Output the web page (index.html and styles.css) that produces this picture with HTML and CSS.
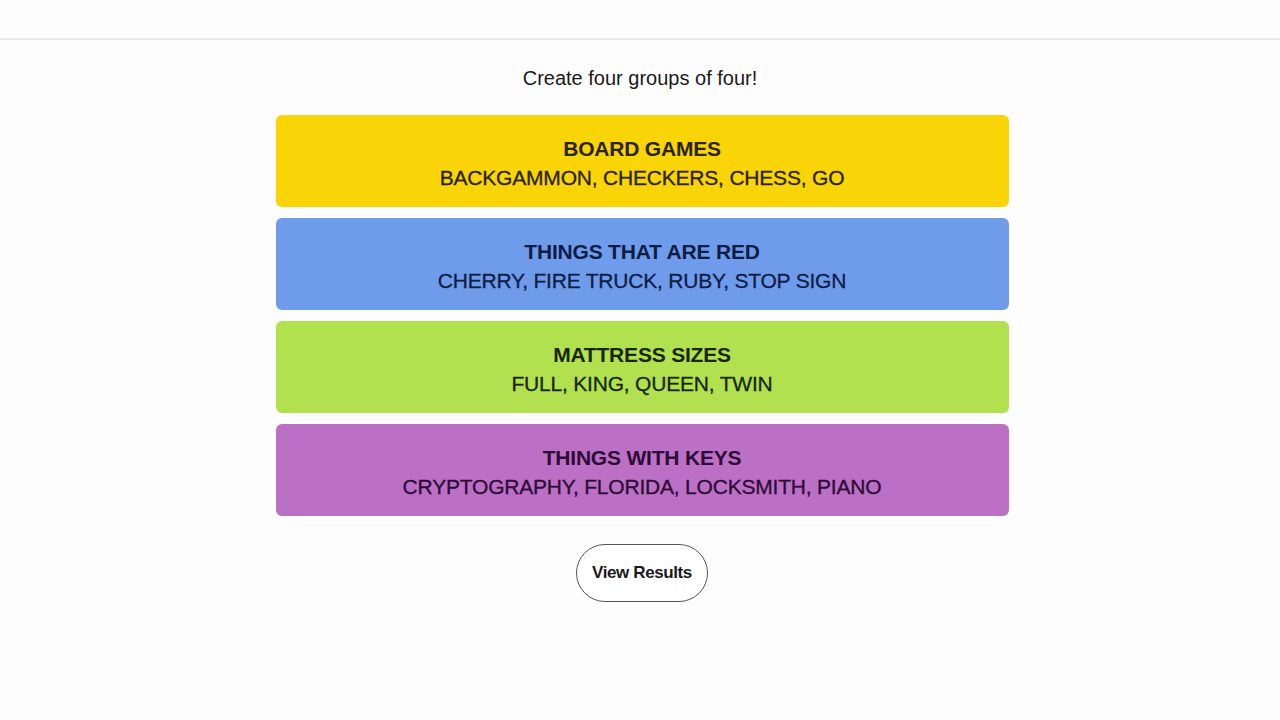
FILE: index.html
```html
<!DOCTYPE html>
<html lang="en">
<head>
    <meta charset="UTF-8">
    <meta name="viewport" content="width=device-width, initial-scale=1.0">
    <title>Connections - Solved</title>
    <link rel="stylesheet" href="styles.css">
</head>
<body>
    <header class="top-bar"></header>

    <main class="game">
        <p class="prompt">Create four groups of four!</p>

        <div class="groups">
            <div class="group yellow">
                <h3>BOARD GAMES</h3>
                <p>BACKGAMMON, CHECKERS, CHESS, GO</p>
            </div>
            <div class="group blue">
                <h3>THINGS THAT ARE RED</h3>
                <p>CHERRY, FIRE TRUCK, RUBY, STOP SIGN</p>
            </div>
            <div class="group green">
                <h3>MATTRESS SIZES</h3>
                <p>FULL, KING, QUEEN, TWIN</p>
            </div>
            <div class="group purple">
                <h3>THINGS WITH KEYS</h3>
                <p>CRYPTOGRAPHY, FLORIDA, LOCKSMITH, PIANO</p>
            </div>
        </div>

        <button class="results-btn">View Results</button>
    </main>
</body>
</html>
```

FILE: styles.css
```css
* {
    margin: 0;
    padding: 0;
    box-sizing: border-box;
}

body {
    font-family: 'Liberation Sans', Arial, sans-serif;
    background: #fdfdfd;
    color: #121212;
    min-height: 100vh;
}

.top-bar {
    height: 40px;
    border-bottom: 2px solid #e8e8e8;
}

.game {
    display: flex;
    flex-direction: column;
    align-items: center;
}

.prompt {
    margin-top: 26px;
    font-size: 20px;
    color: #1a1a1a;
    line-height: 24px;
}

.groups {
    width: 733px;
    margin-top: 25px;
    margin-left: 4px;
    display: flex;
    flex-direction: column;
    gap: 11px;
}

.group {
    height: 92px;
    border-radius: 6px;
    display: flex;
    flex-direction: column;
    justify-content: center;
    align-items: center;
    text-align: center;
    padding-top: 4px;
}

.group h3 {
    font-size: 21px;
    font-weight: 700;
    line-height: 29px;
    letter-spacing: -0.2px;
}

.group p {
    font-size: 21px;
    line-height: 29px;
    letter-spacing: -0.2px;
    -webkit-text-stroke: 0.3px currentColor;
}

.yellow { background: #f9d406; color: #2a2306; }
.blue { background: #6f9cea; color: #0d1d45; }
.green { background: #b1e14e; color: #172606; }
.purple { background: #bb70c5; color: #2c0b35; }

.results-btn {
    margin-top: 28px;
    margin-left: 4px;
    width: 132px;
    height: 58px;
    border: 1.5px solid #555;
    border-radius: 30px;
    background: #fff;
    font-family: 'Liberation Sans', Arial, sans-serif;
    font-size: 17px;
    font-weight: 700;
    letter-spacing: -0.4px;
    color: #1a1a1a;
    cursor: pointer;
}
```
